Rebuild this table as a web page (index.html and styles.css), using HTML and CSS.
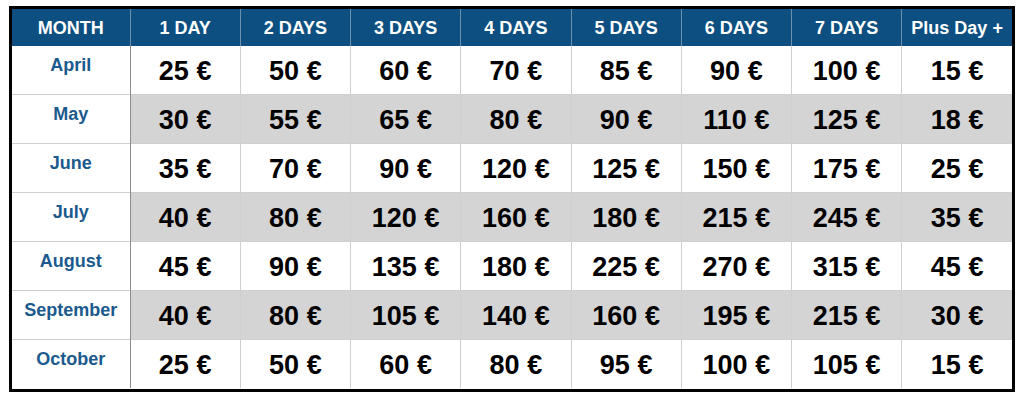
FILE: index.html
```html
<!DOCTYPE html>
<html lang="en">
<head>
<meta charset="utf-8">
<title>Prices</title>
<link rel="stylesheet" href="styles.css">
</head>
<body>
<div class="frame">
<table class="prices">
<colgroup><col class="c-month"><col><col><col><col><col><col><col><col></colgroup>
<thead>
<tr><th>MONTH</th><th>1 DAY</th><th>2 DAYS</th><th>3 DAYS</th><th>4 DAYS</th><th>5 DAYS</th><th>6 DAYS</th><th>7 DAYS</th><th>Plus Day +</th></tr>
</thead>
<tbody>
<tr><td class="month">April</td><td>25 €</td><td>50 €</td><td>60 €</td><td>70 €</td><td>85 €</td><td>90 €</td><td>100 €</td><td>15 €</td></tr>
<tr class="alt"><td class="month">May</td><td>30 €</td><td>55 €</td><td>65 €</td><td>80 €</td><td>90 €</td><td>110 €</td><td>125 €</td><td>18 €</td></tr>
<tr><td class="month">June</td><td>35 €</td><td>70 €</td><td>90 €</td><td>120 €</td><td>125 €</td><td>150 €</td><td>175 €</td><td>25 €</td></tr>
<tr class="alt"><td class="month">July</td><td>40 €</td><td>80 €</td><td>120 €</td><td>160 €</td><td>180 €</td><td>215 €</td><td>245 €</td><td>35 €</td></tr>
<tr><td class="month">August</td><td>45 €</td><td>90 €</td><td>135 €</td><td>180 €</td><td>225 €</td><td>270 €</td><td>315 €</td><td>45 €</td></tr>
<tr class="alt"><td class="month">September</td><td>40 €</td><td>80 €</td><td>105 €</td><td>140 €</td><td>160 €</td><td>195 €</td><td>215 €</td><td>30 €</td></tr>
<tr><td class="month">October</td><td>25 €</td><td>50 €</td><td>60 €</td><td>80 €</td><td>95 €</td><td>100 €</td><td>105 €</td><td>15 €</td></tr>
</tbody>
</table>
</div>
</body>
</html>
```
FILE: styles.css
```css
html, body {
  margin: 0;
  padding: 0;
  background: #fff;
}
.frame {
  width: 1000px;
  height: 380px;
  margin: 6px 0 0 9px;
  border: 3px solid #000;
  overflow: hidden;
}
.prices {
  width: 1000px;
  border-collapse: collapse;
  table-layout: fixed;
  font-family: "Liberation Sans", Arial, Helvetica, sans-serif;
  font-weight: 700;
}
.c-month {
  width: 118px;
}
.prices th {
  height: 35px;
  padding: 2px 0 0;
  background: #0c4f80;
  color: #fff;
  font-size: 18px;
  font-weight: 700;
  text-align: center;
  vertical-align: middle;
  border-left: 1px solid #6d90ad;
}
.prices th:first-child {
  border-left: none;
}
.prices td {
  height: 46px;
  padding: 2px 0 0;
  text-align: center;
  vertical-align: middle;
  font-size: 27px;
  line-height: 30px;
  color: #000;
  border-left: 1px solid #cfcfcf;
  border-top: 1px solid #cfcfcf;
}
.prices tr.alt td {
  background: #d4d4d4;
}
.prices td.month,
.prices tr.alt td.month {
  height: 38px;
  padding: 0 0 10px;
  background: #fff;
  color: #1b5a8d;
  font-size: 18px;
  line-height: 20px;
  border-left: none;
  border-right: 1px solid #8c8c8c;
}
.prices tbody tr:first-child td {
  border-top: none;
}
```
